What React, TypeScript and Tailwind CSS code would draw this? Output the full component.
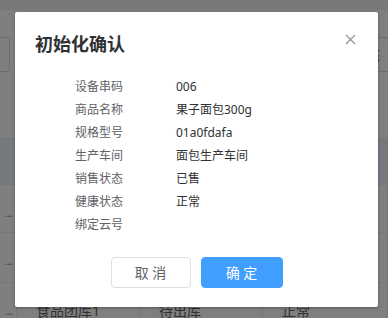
const font = { fontFamily: '"Noto Sans", "Noto Sans CJK SC", sans-serif' }

const fields: { label: string; value: string }[] = [
  { label: '设备串码', value: '006' },
  { label: '商品名称', value: '果子面包300g' },
  { label: '规格型号', value: '01a0fdafa' },
  { label: '生产车间', value: '面包生产车间' },
  { label: '销售状态', value: '已售' },
  { label: '健康状态', value: '正常' },
  { label: '绑定云号', value: '' },
]

// table rows of the page behind the dialog; only the edges show through
const rows = [
  { h: 'h-[46px]', bg: 'bg-[#ecf4ff]', cells: ['', '', '', ''] },
  { h: 'h-[48px]', bg: 'bg-white', cells: ['...', '', '', ''] },
  { h: 'h-[50px]', bg: 'bg-white', cells: ['...', '', '', ''] },
  { h: 'h-[60px]', bg: 'bg-white', cells: ['...', '食品团库1', '待出库', '正常'] },
]

function PageBehind() {
  return (
    <div className="flex flex-col w-full bg-white text-[14px] text-[#606266]">
      <div className="h-[10px] shrink-0 bg-[#eef0f2]" />
      <div className="flex items-start justify-between h-[83px] shrink-0 pt-[27px]">
        <div className="-ml-[20px] w-[30px] h-[35px] border border-[#d4d7de] rounded-[4px]" />
        <div className="flex items-center h-[35px] w-[40px] border-y border-[#d4d7de] pl-[4px] text-[#555]">
          状态
        </div>
      </div>
      <div className="h-[46px] shrink-0 border-b border-[#ebeef5]" />
      {rows.map((r, i) => (
        <div
          key={i}
          className={`grid grid-cols-[17px_123px_123px_125px] shrink-0 border-b border-[#ebeef5] ${r.h} ${r.bg}`}
        >
          {r.cells.map((c, j) => (
            <div
              key={j}
              className={`flex items-start pt-[18px] border-r border-[#ebeef5] leading-[20px] ${j === 0 ? 'justify-end pr-[3px] text-[10px]' : 'pl-[19px]'}`}
            >
              {c}
            </div>
          ))}
        </div>
      ))}
    </div>
  )
}

export default function App() {
  return (
    <div className="relative w-[388px] h-[318px] overflow-hidden" style={font}>
      <PageBehind />
      <div className="absolute inset-0 bg-black/50 pt-[12px] pl-[15px]">
        <div className="relative w-[363px] h-[295px] bg-white rounded-[2px] shadow-[0_1px_3px_rgba(0,0,0,0.3)] flex flex-col">
          <div className="pt-[20px] px-[20px]">
            <h2 className="h-[24px] leading-[24px] text-[18px] font-bold text-[#303133]">初始化确认</h2>
          </div>
          <button className="absolute top-[22px] right-[22px] w-[11px] h-[11px] text-[#909399]" aria-label="close">
            <svg viewBox="0 0 11 11" width="11" height="11" fill="none" stroke="currentColor" strokeWidth="1.2">
              <path d="M1 1L10 10M10 1L1 10" />
            </svg>
          </button>
          <div className="pt-[19px] pl-[60px]">
            {fields.map((f) => (
              <div key={f.label} className="flex h-[23px] items-center text-[12px] leading-[16px]">
                <span className="w-[101px] text-[#606266]">{f.label}</span>
                <span className="text-[#303133]">{f.value}</span>
              </div>
            ))}
          </div>
          <div className="flex justify-center gap-[10px] pt-[21px]">
            <button className="w-[80px] h-[31px] rounded-[4px] border border-[#dcdfe6] bg-white text-[14px] text-[#606266]">
              取 消
            </button>
            <button className="w-[82px] h-[31px] rounded-[4px] border border-[#409eff] bg-[#409eff] text-[14px] text-white">
              确 定
            </button>
          </div>
        </div>
      </div>
    </div>
  )
}
